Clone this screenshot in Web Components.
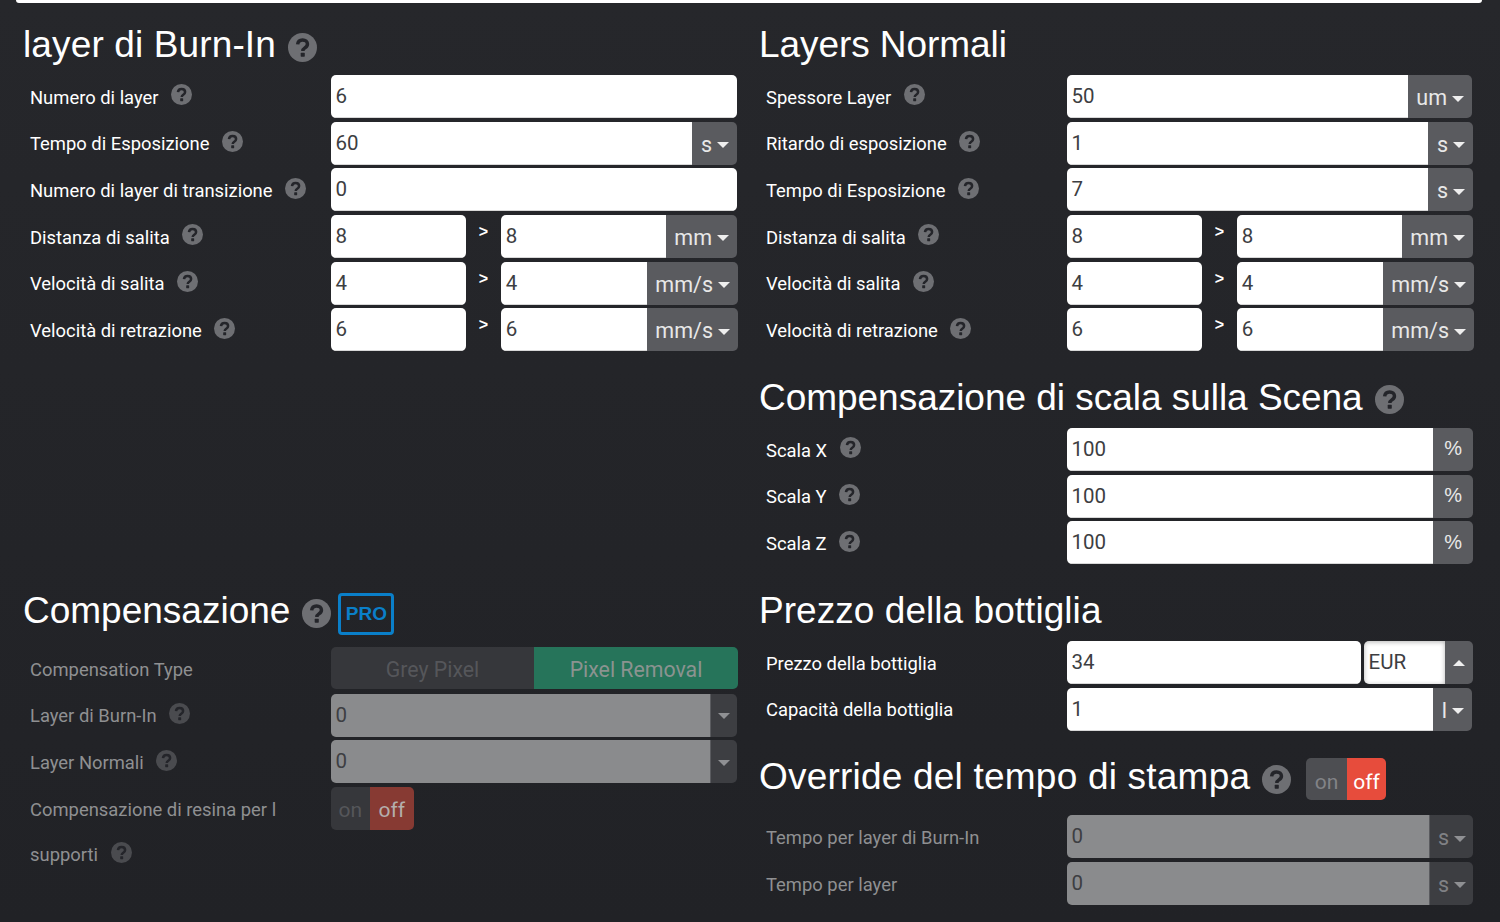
<!DOCTYPE html>
<html>
<head>
<meta charset="utf-8">
<style>
html, body { margin: 0; height: 100%; overflow: hidden; background: linear-gradient(#26272b, #212226); }
</style>
</head>
<body>
<settings-page>
  <settings-section slot="a">
    <section-title help style="letter-spacing:.13px">layer di Burn-In</section-title>
    <form-row help label="Numero di layer"><text-field value="6"></text-field></form-row>
    <form-row help label="Tempo di Esposizione"><text-field value="60" unit="s"></text-field></form-row>
    <form-row help label="Numero di layer di transizione"><text-field value="0"></text-field></form-row>
    <form-row help label="Distanza di salita"><pair-field value="8" unit="mm"></pair-field></form-row>
    <form-row help label="Velocità di salita"><pair-field value="4" unit="mm/s" style="margin-right:-1px"></pair-field></form-row>
    <form-row help label="Velocità di retrazione"><pair-field value="6" unit="mm/s" style="margin-right:-1px"></pair-field></form-row>
  </settings-section>

  <settings-section slot="b">
    <section-title style="letter-spacing:-.07px">Layers Normali</section-title>
    <form-row help label="Spessore Layer"><text-field value="50" unit="um" style="margin-right:1px"></text-field></form-row>
    <form-row help label="Ritardo di esposizione"><text-field value="1" unit="s"></text-field></form-row>
    <form-row help label="Tempo di Esposizione"><text-field value="7" unit="s"></text-field></form-row>
    <form-row help label="Distanza di salita"><pair-field value="8" unit="mm"></pair-field></form-row>
    <form-row help label="Velocità di salita"><pair-field value="4" unit="mm/s" style="margin-right:-1px"></pair-field></form-row>
    <form-row help label="Velocità di retrazione"><pair-field value="6" unit="mm/s" style="margin-right:-1px"></pair-field></form-row>
    <section-title help style="margin-top:11px;letter-spacing:-.03px">Compensazione di scala sulla Scena</section-title>
    <form-row help label="Scala X"><text-field value="100" unit="%" plain></text-field></form-row>
    <form-row help label="Scala Y"><text-field value="100" unit="%" plain></text-field></form-row>
    <form-row help label="Scala Z"><text-field value="100" unit="%" plain></text-field></form-row>
  </settings-section>

  <settings-section slot="c">
    <section-title help style="margin-bottom:6px">Compensazione<pro-badge slot="extra">PRO</pro-badge></section-title>
    <form-row dim label="Compensation Type"><segment-switch></segment-switch></form-row>
    <form-row dim help label="Layer di Burn-In"><text-field value="0" unit=" " disabled></text-field></form-row>
    <form-row dim help label="Layer Normali"><text-field value="0" unit=" " disabled></text-field></form-row>
    <form-row dim help label="Compensazione di resina per l supporti"><on-off disabled></on-off></form-row>
  </settings-section>

  <settings-section slot="d">
    <section-title style="letter-spacing:.05px">Prezzo della bottiglia</section-title>
    <form-row label="Prezzo della bottiglia"><price-field value="34" currency="EUR"></price-field></form-row>
    <form-row label="Capacità della bottiglia"><text-field value="1" unit="l" style="margin-right:1px"></text-field></form-row>
    <section-title help style="margin-top:11px;margin-bottom:8px;letter-spacing:.21px">Override del tempo di stampa<on-off slot="extra" title-size></on-off></section-title>
    <form-row dim label="Tempo per layer di Burn-In"><text-field value="0" unit="s" disabled></text-field></form-row>
    <form-row dim label="Tempo per layer"><text-field value="0" unit="s" disabled></text-field></form-row>
  </settings-section>
</settings-page>

<script>
const holeColor = '#24252a';

const helpIcon = (size, fill) => `
<svg class="help" width="${size}" height="${size}" viewBox="0 0 24 24">
  <circle cx="12" cy="12" r="12" fill="${fill}"/>
  <path d="M8 9.4c.2-2.4 1.9-3.7 4.1-3.7 2.3 0 4 1.4 4 3.4 0 1.6-.9 2.4-2.1 3.2-1.1.7-1.7 1.2-1.7 2.5" fill="none" stroke="${holeColor}" stroke-width="2.9"/>
  <rect x="10.5" y="16.4" width="3.4" height="3.2" rx=".5" fill="${holeColor}"/>
</svg>`;

const caret = (up) => `<i class="caret${up ? ' up' : ''}"></i>`;

const fieldCss = `
.box { display: flex; flex: 1; min-width: 0; height: 43px; border-radius: 5px; overflow: hidden; font: 20.5px Roboto, sans-serif; }
.input { flex: 1; min-width: 0; background: #fff; color: #3d3e42; padding-left: 4.5px; line-height: 43.5px; box-sizing: border-box; box-shadow: inset 0 -1px 0 #d8d8d8; }
.addon { display: flex; align-items: center; justify-content: center; gap: 5px; padding: 2px 8px 0 8.5px; background: #5a5b5f; color: #e8e8e8; font-size: 21.5px; }
.addon.plain { padding: 0 11px 1px; font-family: "Liberation Sans", sans-serif; font-size: 20px; }
.caret { display: block; width: 0; height: 0; margin-top: 2px; border: 6px solid transparent; border-top: 6px solid #eee; border-bottom: 0; }
.caret.up { margin-top: 0; border-top: 0; border-bottom: 6px solid #eee; }
.off .input { background: #8a8b8d; box-shadow: none; }
.off .addon { background: #3d3e42; color: #808185; border-left: 1px solid #5a5b5f; padding-left: 7.5px; padding-right: 7px; }
.off .caret { border-top-color: #8f9093; }
`;

class SettingsPage extends HTMLElement {
  constructor() {
    super();
    this.attachShadow({ mode: 'open' }).innerHTML = `
    <style>
    :host { display: block; height: 922px; }
    .bar { height: 3px; margin: 0 18px 0 16px; background: #fff; border-radius: 0 0 6px 6px; }
    .grid { display: grid; grid-template-columns: 736px 715px; grid-template-rows: 566px auto; padding: 10px 0 0 23px; }
    </style>
    <div class="bar"></div>
    <div class="grid">
      <slot name="a"></slot><slot name="b"></slot>
      <slot name="c"></slot><slot name="d"></slot>
    </div>`;
  }
}

class SettingsSection extends HTMLElement {
  constructor() {
    super();
    this.attachShadow({ mode: 'open' }).innerHTML = `
    <style>:host { display: block; }</style>
    <slot></slot>`;
  }
}

class SectionTitle extends HTMLElement {
  constructor() {
    super();
    const help = this.hasAttribute('help') ? helpIcon(29, '#6e6f73') : '';
    this.attachShadow({ mode: 'open' }).innerHTML = `
    <style>
    :host { display: flex; align-items: center; height: 62px; color: #fff; font: 37px "Liberation Sans", Arial, sans-serif; }
    span { margin-top: 2px; }
    .help { margin: 6px 0 0 12px; flex: none; }
    ::slotted([slot=extra]) { margin-left: 15px; }
    </style>
    <span><slot></slot></span>${help}<slot name="extra"></slot>`;
  }
}

class ProBadge extends HTMLElement {
  constructor() {
    super();
    this.attachShadow({ mode: 'open' }).innerHTML = `
    <style>
    :host { display: flex; align-items: center; justify-content: center; width: 56px; height: 42px; box-sizing: border-box; margin: 8px 0 0 7px !important; border: 3px solid #0a7fc9; border-radius: 4px; color: #0a7fc9; letter-spacing: 0; font: 700 19px "Liberation Sans", sans-serif; }
    </style>
    <slot></slot>`;
  }
}

class FormRow extends HTMLElement {
  constructor() {
    super();
    const dim = this.hasAttribute('dim');
    const help = this.hasAttribute('help') ? helpIcon(21, dim ? '#4a4b4f' : '#6e6f73') : '';
    this.attachShadow({ mode: 'open' }).innerHTML = `
    <style>
    :host { display: grid; grid-template-columns: 308px 406px; min-height: 46.67px; }
    .label { padding: 0 0 0 7px; margin-top: -.3px; color: ${dim ? '#8f9092' : '#fff'}; font: 18.4px/45.5px Roboto, sans-serif; }
    .help { margin-left: 8px; vertical-align: -1.6px; }
    .value { display: flex; align-items: flex-start; }
    </style>
    <div class="label">${this.getAttribute('label')} ${help}</div>
    <div class="value"><slot></slot></div>`;
  }
}

class TextField extends HTMLElement {
  constructor() {
    super();
    const unit = this.getAttribute('unit');
    const plain = this.hasAttribute('plain');
    const addon = unit === null ? '' : unit === ' '
      ? `<div class="addon" style="padding:0 7.5px 0 7px">${caret()}</div>`
      : `<div class="addon ${plain ? 'plain' : ''}">${unit}${plain ? '' : caret()}</div>`;
    this.attachShadow({ mode: 'open' }).innerHTML = `
    <style>
    :host { display: flex; flex: 1; min-width: 0; }
    ${fieldCss}
    </style>
    <div class="box ${this.hasAttribute('disabled') ? 'off' : ''}">
      <div class="input">${this.getAttribute('value')}</div>${addon}
    </div>`;
  }
}

class PairField extends HTMLElement {
  constructor() {
    super();
    const v = this.getAttribute('value');
    this.attachShadow({ mode: 'open' }).innerHTML = `
    <style>
    :host { display: flex; flex: 1; min-width: 0; }
    ${fieldCss}
    .first { flex: none; width: 134.5px; }
    .sep { flex: none; width: 35.7px; text-align: center; color: #fff; font: 700 16px/34px "Liberation Sans", sans-serif; }
    </style>
    <div class="box first"><div class="input">${v}</div></div>
    <div class="sep">&gt;</div>
    <div class="box"><div class="input">${v}</div><div class="addon">${this.getAttribute('unit')}${caret()}</div></div>`;
  }
}

class PriceField extends HTMLElement {
  constructor() {
    super();
    this.attachShadow({ mode: 'open' }).innerHTML = `
    <style>
    :host { display: flex; flex: 1; gap: 3px; min-width: 0; }
    ${fieldCss}
    .first { flex: none; width: 294px; }
    .input.cur { box-shadow: inset 0 1px 5px rgba(0,0,0,.3); }
    .addon { width: 28px; box-sizing: border-box; padding: 0; }
    </style>
    <div class="box first"><div class="input">${this.getAttribute('value')}</div></div>
    <div class="box"><div class="input cur">${this.getAttribute('currency')}</div><div class="addon">${caret(true)}</div></div>`;
  }
}

class SegmentSwitch extends HTMLElement {
  constructor() {
    super();
    this.attachShadow({ mode: 'open' }).innerHTML = `
    <style>
    :host { display: flex; flex: 1; height: 42px; margin-right: -1px; border-radius: 5px; overflow: hidden; font: 21.3px/45px Roboto, sans-serif; text-align: center; }
    .a { flex: none; width: 203px; background: #36373b; color: #55565a; }
    .b { flex: 1; background: #26745a; color: #8b9390; }
    </style>
    <div class="a">Grey Pixel</div><div class="b">Pixel Removal</div>`;
  }
}

class OnOff extends HTMLElement {
  constructor() {
    super();
    const dis = this.hasAttribute('disabled');
    const small = this.hasAttribute('title-size');
    this.attachShadow({ mode: 'open' }).innerHTML = `
    <style>
    :host { display: inline-flex; height: ${small ? 42 : 43}px; margin-top: ${small ? 6 : 0}px; border-radius: 5px; overflow: hidden; letter-spacing: 0; font: 21px/${small ? 48 : 47}px Roboto, sans-serif; flex: none; }
    span { display: block; }
    .on { padding: 0 ${small ? 8.5 : 7.5}px; background: ${dis ? '#36373b' : '#4d4e52'}; color: ${dis ? '#55565a' : '#828387'}; }
    .no { padding: 0 ${small ? 6.5 : 9}px; background: ${dis ? '#873a33' : '#e74c3c'}; color: ${dis ? '#b4aeac' : '#fff'}; }
    </style>
    <span class="on">on</span><span class="no">off</span>`;
  }
}

customElements.define('settings-page', SettingsPage);
customElements.define('settings-section', SettingsSection);
customElements.define('section-title', SectionTitle);
customElements.define('pro-badge', ProBadge);
customElements.define('form-row', FormRow);
customElements.define('text-field', TextField);
customElements.define('pair-field', PairField);
customElements.define('price-field', PriceField);
customElements.define('segment-switch', SegmentSwitch);
customElements.define('on-off', OnOff);
</script>
</body>
</html>
